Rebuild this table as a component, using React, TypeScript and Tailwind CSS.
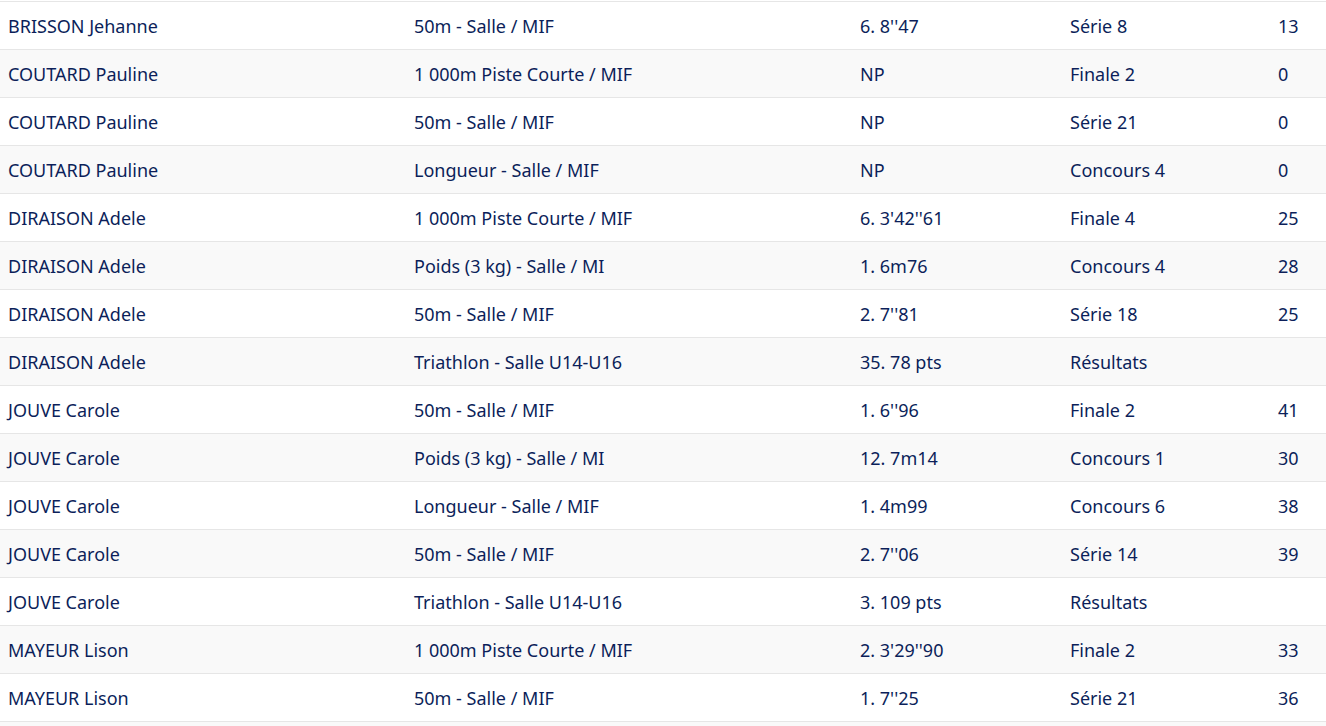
const rows: [string, string, string, string, string][] = [
  ['BRISSON Jehanne', '50m - Salle / MIF', '6. 8\'\'47', 'Série 8', '13'],
  ['COUTARD Pauline', '1 000m Piste Courte / MIF', 'NP', 'Finale 2', '0'],
  ['COUTARD Pauline', '50m - Salle / MIF', 'NP', 'Série 21', '0'],
  ['COUTARD Pauline', 'Longueur - Salle / MIF', 'NP', 'Concours 4', '0'],
  ['DIRAISON Adele', '1 000m Piste Courte / MIF', '6. 3\'42\'\'61', 'Finale 4', '25'],
  ['DIRAISON Adele', 'Poids (3 kg) - Salle / MI', '1. 6m76', 'Concours 4', '28'],
  ['DIRAISON Adele', '50m - Salle / MIF', '2. 7\'\'81', 'Série 18', '25'],
  ['DIRAISON Adele', 'Triathlon - Salle U14-U16', '35. 78 pts', 'Résultats', ''],
  ['JOUVE Carole', '50m - Salle / MIF', '1. 6\'\'96', 'Finale 2', '41'],
  ['JOUVE Carole', 'Poids (3 kg) - Salle / MI', '12. 7m14', 'Concours 1', '30'],
  ['JOUVE Carole', 'Longueur - Salle / MIF', '1. 4m99', 'Concours 6', '38'],
  ['JOUVE Carole', '50m - Salle / MIF', '2. 7\'\'06', 'Série 14', '39'],
  ['JOUVE Carole', 'Triathlon - Salle U14-U16', '3. 109 pts', 'Résultats', ''],
  ['MAYEUR Lison', '1 000m Piste Courte / MIF', '2. 3\'29\'\'90', 'Finale 2', '33'],
  ['MAYEUR Lison', '50m - Salle / MIF', '1. 7\'\'25', 'Série 21', '36'],
]

export default function App() {
  return (
    <div className="h-[726px] overflow-hidden bg-[#f9f9f9]" style={{ fontFamily: '"Noto Sans", Lato, sans-serif' }}>
      <div className="h-px bg-white" />
      <table className="w-full border-collapse border-b border-[#e6e6e6] text-[18px] leading-6 text-[#0c1f5a]">
        <tbody>
          {rows.map((r, i) => (
            <tr key={i} className={`h-12 border-t border-[#e6e6e6] ${i % 2 === 1 ? 'bg-[#f9f9f9]' : 'bg-white'}`}>
              <td className="w-[406px] px-2 pt-px align-middle">{r[0]}</td>
              <td className="w-[446px] px-2 pt-px align-middle">{r[1]}</td>
              <td className="w-[210px] px-2 pt-px align-middle">{r[2]}</td>
              <td className="w-[208px] px-2 pt-px align-middle">{r[3]}</td>
              <td className="px-2 pt-px align-middle">{r[4]}</td>
            </tr>
          ))}
        </tbody>
      </table>
    </div>
  )
}
